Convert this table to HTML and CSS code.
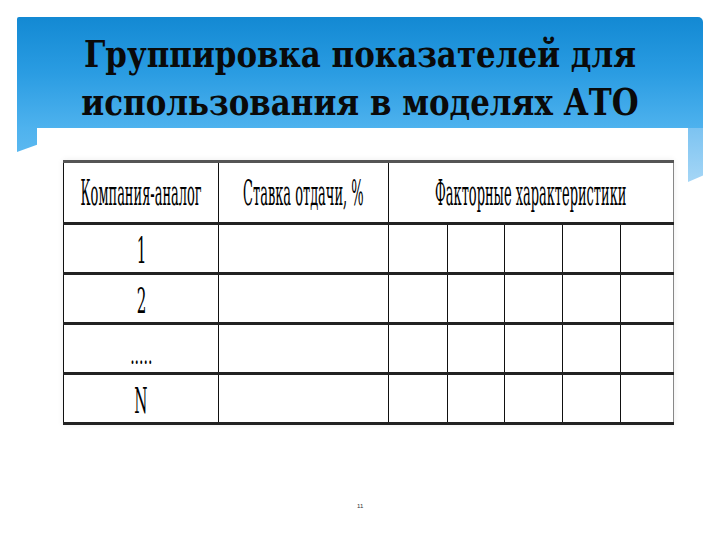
FILE: index.html
```html
<!DOCTYPE html>
<html lang="ru">
<head>
<meta charset="utf-8">
<title>Группировка показателей</title>
<link rel="stylesheet" href="styles.css">
</head>
<body>
<div class="slide">
  <header class="banner">
    <h1 class="title">Группировка показателей для<br>использования в моделях АТО</h1>
  </header>
  <table class="grid">
    <colgroup>
      <col class="c1"><col class="c2">
      <col class="f1"><col class="f2"><col class="f3"><col class="f4"><col class="f5">
    </colgroup>
    <tr class="head">
      <td><span class="nar h">Компания-аналог</span></td>
      <td><span class="nar h">Ставка отдачи, %</span></td>
      <td colspan="5"><span class="nar h">Факторные характеристики</span></td>
    </tr>
    <tr><td><span class="nar n">1</span></td><td></td><td></td><td></td><td></td><td></td><td></td></tr>
    <tr><td><span class="nar n">2</span></td><td></td><td></td><td></td><td></td><td></td><td></td></tr>
    <tr><td class="dotcell"><span class="nar d">.....</span></td><td></td><td></td><td></td><td></td><td></td><td></td></tr>
    <tr><td><span class="nar n">N</span></td><td></td><td></td><td></td><td></td><td></td><td></td></tr>
  </table>
  <div class="pagenum">11</div>
</div>
</body>
</html>
```
FILE: styles.css
```css
html, body {
  margin: 0;
  padding: 0;
  background: #ffffff;
}
.slide {
  width: 720px;
  height: 540px;
  position: relative;
  overflow: hidden;
  padding-top: 17px;
  box-sizing: border-box;
}
.banner {
  position: relative;
  margin-left: 17px;
  width: 686px;
  height: 111px;
  background: linear-gradient(to bottom, #1389d3 0%, #2a9ce2 50%, #4eb2ee 100%);
  border-radius: 2px 5px 0 0;
  box-sizing: border-box;
  padding-top: 13px;
}
.banner::before {
  content: "";
  position: absolute;
  left: 0;
  top: 111px;
  width: 20px;
  height: 24px;
  background: linear-gradient(to bottom, #4eb2ee, #5ab8f0);
  clip-path: polygon(0 0, 100% 0, 100% 70%, 0 100%);
}
.banner::after {
  content: "";
  position: absolute;
  right: 0;
  top: 111px;
  width: 15px;
  height: 54px;
  background: linear-gradient(to bottom, #7cc3f1, #a5d6f6);
  clip-path: polygon(0 0, 100% 0, 100% 88%, 0 100%);
}
.title {
  margin: 0;
  font-family: "DejaVu Serif", serif;
  font-weight: bold;
  font-size: 37px;
  line-height: 48px;
  text-align: center;
  color: #0a0a0a;
  white-space: nowrap;
  transform: scaleX(0.835);
  transform-origin: center;
}
.grid {
  margin-left: 63px;
  margin-top: 32px;
  width: 610px;
  table-layout: fixed;
  border-collapse: collapse;
  font-family: "DejaVu Serif", serif;
  color: #000;
  box-shadow: 0 0 6px rgba(0,0,0,0.08);
}
.c1 { width: 155px; }
.c2 { width: 170px; }
.f1 { width: 59px; }
.f2 { width: 57px; }
.f3 { width: 58px; }
.f4 { width: 58px; }
.f5 { width: 53px; }
.grid td {
  border-left: 1px solid #111;
  border-right: 1px solid #111;
  border-bottom: 3px solid #222;
  height: 47px;
  padding: 0;
  text-align: center;
  vertical-align: middle;
  white-space: nowrap;
  overflow: visible;
}
.grid tr:first-child td {
  border-top: 3px solid #555;
}
.grid td:last-child {
  border-right: 1px solid #888;
}
.grid tr.head td {
  height: 59px;
}
.nar {
  display: inline-block;
  transform-origin: center;
  line-height: 1;
}
.h {
  font-size: 36px;
  transform: scaleX(0.36);
  margin: 0 -300px;
}
.n {
  font-size: 36px;
  transform: scaleX(0.42);
  position: relative;
  top: 2px;
}
.d {
  font-size: 28px;
  transform: scaleX(0.5);
  position: relative;
  top: 6px;
}
.pagenum {
  position: absolute;
  left: 357px;
  top: 503px;
  font-family: "Liberation Sans", Arial, sans-serif;
  font-size: 6px;
  color: #333;
}
```
